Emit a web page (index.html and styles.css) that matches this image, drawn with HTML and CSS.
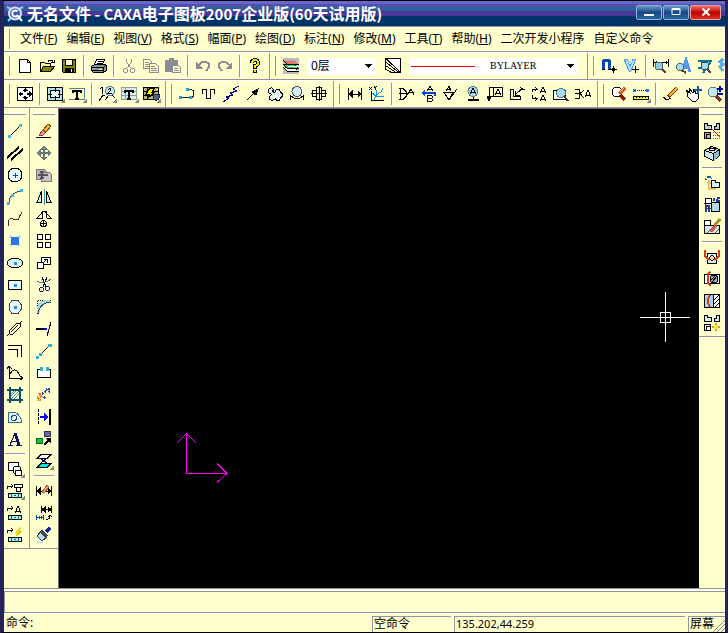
FILE: index.html
```html
<!DOCTYPE html>
<html lang="zh-CN">
<head>
<meta charset="utf-8">
<title>无名文件 - CAXA电子图板2007企业版</title>
<link rel="stylesheet" href="styles.css">
</head>
<body>
<div class="window">
<header class="titlebar">
  <svg class="logo" viewBox="0 0 18 18"><path d="M1 2l4 2M17 2l-4 2M2 16l3-3" stroke="#9cc8ff" stroke-width="2"/><circle cx="9" cy="8.500" r="6" fill="#3858a8" stroke="#d8e8ff" stroke-width="2"/><path d="M11.500 6.500a3 3 0 1 0 0 4M11 10l5 6" stroke="#fff" stroke-width="2"/></svg>
  <h1>无名文件<span> - CAXA</span>电子图板<span>2007</span>企业版<span>(60</span>天试用版<span>)</span></h1>
  <div class="winbtns">
    <button aria-label="最小化"><svg viewBox="0 0 16 12"><path d="M3 9h10" stroke="#fff" stroke-width="2"/></svg></button>
    <button aria-label="最大化"><svg viewBox="0 0 16 12"><path d="M4 2.500h8v6h-8zM4 3.500h8" stroke="#fff"/></svg></button>
    <button class="close" aria-label="关闭"><svg viewBox="0 0 16 12"><path d="M4.500 2.500l7 7M11.500 2.500l-7 7" stroke="#fff" stroke-width="2"/></svg></button>
  </div>
</header>
<nav class="menubar">
  <i class="grip"></i>
  <button>文件(<u>F</u>)</button><button>编辑(<u>E</u>)</button><button>视图(<u>V</u>)</button><button>格式(<u>S</u>)</button><button>幅面(<u>P</u>)</button><button>绘图(<u>D</u>)</button><button>标注(<u>N</u>)</button><button>修改(<u>M</u>)</button><button>工具(<u>T</u>)</button><button>帮助(<u>H</u>)</button><button>二次开发小程序</button><button>自定义命令</button>
</nav>
<div class="row">
  <div class="bar"><i class="grip"></i>
    <button aria-label="新建"><svg viewBox="0 0 16 16"><path d="M2.500 1.500h8l3 3v10h-11zM10.500 1.500v3h3" fill="#fff"/></svg></button>
    <button aria-label="打开"><svg viewBox="0 0 16 16"><path d="M1.500 13.500v-9h4l1 1h5v3" fill="#ffff9c"/><path d="M1.500 13.500l3-5h11l-4 5z" fill="#848400"/><path d="M9 3.500q3-3 5 0m1-2v3h-3"/></svg></button>
    <button aria-label="保存"><svg viewBox="0 0 16 16"><path d="M1.500 1.500h13v13h-12l-1-1z" fill="#848400"/><path d="M4.500 1.500h7v6h-7z" fill="#ffffce"/><path d="M4 10h8v4H4z" fill="#000"/><path d="M10.500 11v3" stroke="#fff"/></svg></button>
    <i class="sep"></i>
    <button aria-label="打印"><svg viewBox="0 0 16 16"><path d="M5.500 1.500h8l-2 5h-8z" fill="#fff"/><path d="M6.500 3.500h5M5.500 5.500h5"/><path d="M.5 8.500l3-2h11l1 2v4l-3 2h-10l-2-2z" fill="#8c9c9c"/><path d="M1 9.500h11l3-2M12.500 10v4M1 12.500h11"/><path d="M8 11h3" stroke="#ff0"/></svg></button>
    <i class="sep"></i>
    <button class="off" aria-label="剪切"><svg viewBox="0 0 16 16"><path d="M5.500 1v3l5 7M10.500 1v3l-5 7"/><circle cx="4.500" cy="12.500" r="2"/><circle cx="11.500" cy="12.500" r="2"/></svg></button>
    <button class="off" aria-label="复制"><svg viewBox="0 0 16 16"><path d="M.5 1.500h6l2 2v7h-8zM2 4.500h4M2 6.500h5M2 8.500h5"/><path d="M6.500 5.500h6l3 3v6h-9z" fill="#ffffce"/><path d="M8 8.500h4M8 10.500h6M8 12.500h6"/></svg></button>
    <button class="off" aria-label="粘贴"><svg viewBox="0 0 16 16"><path d="M.5 2.500h12v11H.5z" fill="#8c8c94"/><path d="M4 1.500h5" stroke-width="3"/><path d="M7.500 7.500h6l2 2v5h-8z" fill="#ffffce"/><path d="M9 10.500h4M9 12.500h5"/></svg></button>
    <i class="sep"></i>
    <button class="off" aria-label="撤消"><svg viewBox="0 0 16 16"><path d="M4 7q3-4 7-3 4 1 3 5l-3 4" stroke-width="2"/><path d="M1 4v7h7z" fill="#8c8c94" stroke="none"/></svg></button>
    <button class="off" aria-label="恢复"><svg viewBox="0 0 16 16"><path d="M12 7q-3-4-7-3-4 1-3 5l3 4" stroke-width="2"/><path d="M15 4v7H8z" fill="#8c8c94" stroke="none"/></svg></button>
    <i class="sep"></i>
    <button aria-label="帮助"><svg viewBox="0 0 16 16"><path d="M5 5q0-3 3-3t3 3q0 2-3 3v3M8 12v3" stroke-width="4"/><path d="M5 5q0-3 3-3t3 3q0 2-3 3v2M8 12v2" stroke="#ffe600" stroke-width="2"/></svg></button>
  </div>
  <div class="bar"><i class="grip"></i>
    <button aria-label="层控制"><svg viewBox="0 0 16 16"><path d="M0 0h16v16H0z" fill="#bdbdbd" stroke="none"/><path d="M.5 9.500l4 4h11l-4-4z" fill="#fff"/><path d="M.5 6.500l4 4h11l-4-4z" fill="#40d850"/><path d="M4.500 12.500h11M.5 8.500l4 4" stroke="#fff"/><path d="M.5 2.500l4 4h11l-4-4z" fill="#e87068" stroke="#a8a8a8"/><path d="M.5 2.500l4 4h11"/><path d="M4.500 8.500h11" stroke="#fff"/></svg></button>
    <div class="combo layer"><select aria-label="当前层"><option>0层</option></select><svg viewBox="0 0 8 5"><path d="M0 0h8L4 4z" fill="#000" stroke="none"/></svg></div>
    <button aria-label="颜色"><svg viewBox="0 0 16 16"><path d="M1 .5h14.500v14z" fill="#fff"/><path d="M.5 1v3l15 11.500M.5 4.500v3L11 14.500h4M.5 8v3l6 3.500h4"/></svg></button>
    <div class="combo line"><svg class="sample" viewBox="0 0 64 3"><path d="M0 1.500h64" stroke="#f00"/></svg><select aria-label="线型"><option>BYLAYER</option></select><svg viewBox="0 0 8 5"><path d="M0 0h8L4 4z" fill="#000" stroke="none"/></svg></div>
  </div>
  <div class="bar last"><i class="grip"></i>
    <button aria-label="捕捉"><svg viewBox="0 0 16 16"><path d="M2.500 12V4q0-2 3-2t3 2v8" stroke="#0848a8" stroke-width="3"/><path d="M1 11.500h3M7 11.500h3M12.500 8v7M9 11.500h7"/><path d="M11 10h3v3h-3z" fill="#000" stroke="none"/></svg></button>
    <button aria-label="过滤"><svg viewBox="0 0 16 16"><path d="M1 1h3l3 7 3-7h3L8 13H6z" fill="#9cdfff" stroke="#5898f0"/><path d="M4 4h6" stroke="#9cdfff" stroke-width="2"/><path d="M12.500 8v7M9 11.500h7"/></svg></button>
    <i class="sep"></i>
    <button aria-label="查询距离"><svg viewBox="0 0 16 16"><path d="M.5 1v8M15.500 1v8M1 4.500h14M3 3v3M13 3v3"/><circle cx="6" cy="8" r="4" fill="#8ccbe0" stroke="#486878"/><path d="M9 11l4 4" stroke-width="2" stroke="#603838"/></svg></button>
    <button aria-label="查询文字"><svg viewBox="0 0 16 16"><path d="M7 14l4-12 4 12M8 9h5" stroke="#5898f0" stroke-width="3"/><circle cx="5" cy="9" r="3.500" fill="#a5dcec" stroke="#486878"/><path d="M7 12l4 3" stroke-width="2" stroke="#603838"/></svg></button>
    <button aria-label="查询面积"><svg viewBox="0 0 16 16"><path d="M1 3h14M1 10h5M4 3l9 11M14 3L6 15" stroke="#087890" stroke-width="2"/><circle cx="8" cy="8" r="4" fill="#a5dcec" stroke="#246"/><path d="M10 11l4 4" stroke="#603838" stroke-width="2"/></svg></button>
    <button aria-label="查询"><svg viewBox="0 0 16 16"><path d="M4 1L1 4l3 2-3 3 3 4" stroke="#60b0e8" stroke-width="3"/></svg></button>
  </div>
</div>
<div class="row">
  <div class="bar"><i class="grip"></i>
    <button aria-label="显示全部"><svg viewBox="0 0 16 16"><path d="M.5 1.500h15v13H.5z" fill="#fff"/><path d="M8 3v3M8 10v3M3 8h3M10 8h3" stroke-width="2"/><path d="M5 5l3-3 3 3zM5 11l3 3 3-3zM4 5L1 8l3 3zM12 5l3 3-3 3z" fill="#000" stroke="none"/></svg></button>
    <i class="sep"></i>
    <button aria-label="图幅"><svg viewBox="0 0 16 16"><path d="M.5 1.500h15v13H.5z" fill="#b8e0e8"/><path d="M3.500 4.500h9v7h-9z" fill="#e8f8ff"/><path d="M8.500 2v4M8.500 10v4M1 8.500h4M11 8.500h4"/><path class="corner" d="M18 12v5h-5z"/></svg></button>
    <button aria-label="标题栏"><svg viewBox="0 0 16 16"><path d="M0 2.500h15.500v11H0" stroke="#57808c"/><path d="M3 5h10M8 5v8M4 4v3M12 4v3M6 13h4" stroke-width="2"/><path class="corner" d="M18 12v5h-5z"/></svg></button>
    <i class="sep"></i>
    <button aria-label="序号"><svg viewBox="0 0 16 16"><path d="M1 2.500l2-1V8M0 15l4-6h2M6 14l4-5"/><circle cx="11" cy="5" r="4.500" fill="#c8e8ef" stroke="#57808c"/><path d="M9 4q2-3 3 0L9 7.500h4M13 9l3 3"/><path class="corner" d="M18 12v5h-5z"/></svg></button>
    <button aria-label="明细表"><svg viewBox="0 0 16 16"><path d="M.5 1.500h15v12H.5zM4.500 1v12M0 5.500h16M0 9.500h16" stroke="#8ca0a0" fill="#ddeeee"/><path d="M4 5h8M8 5v8M4 4v3M12 4v3M6 13h4" stroke-width="2"/><path class="corner" d="M18 12v5h-5z"/></svg></button>
    <button aria-label="图库"><svg viewBox="0 0 16 16"><path d="M.5 1.500h15v12H.5z" fill="#b8bc72"/><path d="M1 5.500h14M0 9.500h14M4.500 2v12"/><path d="M7 2L3 8h4l-3 5 8-7H9l3-4z" fill="#ff0"/><path d="M10 8h6v4l-3 3-3-3z" fill="#526090" stroke="#223"/><path class="corner" d="M18 12v5h-5z"/></svg></button>
  </div>
  <div class="bar"><i class="grip"></i>
    <button aria-label="轮廓线"><svg viewBox="0 0 16 16"><path d="M1 11.500h11M8 3.500h3q4 0 4 4t-3 4" stroke="#124"/><path d="M0 10h3v3H0zM10 10h3v3h-3zM7 2h3v3H7z" fill="#2aa0d0" stroke="none"/></svg></button>
    <button aria-label="波浪线"><svg viewBox="0 0 16 16"><path d="M1.500 8V5q0-2 2-2t2 2v6q0 2 2 2t2-2V5q0-2 2-2t2 2v3"/></svg></button>
    <button aria-label="双折线"><svg viewBox="0 0 16 16"><path d="M16 0l-6 3 4 2-7 2 3 2-7 2 3 1-6 4" stroke="#000084"/></svg></button>
    <button aria-label="箭头"><svg viewBox="0 0 16 16"><path d="M2 14l8-8"/><path d="M13 3l-2 6-4-3z" fill="#000"/></svg></button>
    <button aria-label="齿轮"><svg viewBox="0 0 16 16"><path d="M1.500 3.500l3-2 2 2-1 2 2 1 2-3h3l1 3 2 1v3l-2 1-1 3h-3l-1-2-3 2-3-1v-3l2-2-3-2z" fill="#def"/><path d="M7 9h3v3H7z" fill="#ffffce" stroke="none"/></svg></button>
    <button aria-label="圆弧拟合"><svg viewBox="0 0 16 16"><circle cx="8" cy="5.500" r="5" fill="#d6eef2" stroke="#456"/><path d="M1.500 14V9.500l4 3h5l4-3V14"/></svg></button>
    <button aria-label="孔轴"><svg viewBox="0 0 16 16"><path d="M0 7.500h16M1.500 4.500h4v6h-4zM5.500 1.500h5v12h-5zM10.500 4.500h4v6h-4zM8.500 0v15"/></svg></button>
  </div>
  <div class="bar"><i class="grip"></i>
    <button aria-label="基本标注"><svg viewBox="0 0 16 16"><path d="M1.500 2v12M14.500 2v12M2 8h12" stroke-width="1"/><path d="M5 5v6L2 8zM11 5v6l3-3z" fill="#000"/></svg></button>
    <button aria-label="坐标标注"><svg viewBox="0 0 16 16"><path d="M2.500 5v9.500H15M0 1l3 3M3 1L0 4M5 0l1 2 2-2M6 2v2"/><path d="M7 10V4M7 9l5-3 2-4M3 7l4 3 8 1M7 10l-2 4" stroke="#1698e8"/></svg></button>
    <i class="sep"></i>
    <button aria-label="倒角标注"><svg viewBox="0 0 16 16"><path d="M0 2.500h4l3 3v5l-3 3H0M1.500 2v11M0 7.500h9M8 9l4-6 3 6M10 6.500h5"/></svg></button>
    <button aria-label="引出说明"><svg viewBox="0 0 16 16"><path d="M1 7h13v3" stroke="#0848c8" stroke-width="2"/><path d="M4 4L0 7l4 3z" fill="#0848c8" stroke="none"/><path d="M6 5l3-5 3 5M7 3.500h4M6.500 9.500h4q2 1 0 3 2 1 0 3h-4zM7 12.500h4"/></svg></button>
    <button aria-label="粗糙度"><svg viewBox="0 0 16 16"><path d="M1 6.500h9L6 14zM6 14l8-11M3 5l3-5 2 5M4 3.500h4"/></svg></button>
    <button aria-label="基准代号"><svg viewBox="0 0 16 16"><circle cx="8" cy="5.500" r="5" fill="#a5d8eb" stroke="#57808c"/><path d="M5 8l3-6 3 6M6 6.500h4M8.500 11v3"/><path d="M3 14h11" stroke-width="2"/></svg></button>
    <button aria-label="形位公差"><svg viewBox="0 0 16 16"><path d="M2.500 1.500h13v9h-13zM6.500 1v9M8 9l3-6 3 6M9 7.500h4"/><path d="M0 10h4l-2 5z" fill="#000"/></svg></button>
    <button aria-label="焊接符号"><svg viewBox="0 0 16 16"><path d="M1.500 3.500v10h10v-3h-7v-7zM14 2L7 8M6.500 5v4h4M11 1l2 2h3"/></svg></button>
    <button aria-label="剖切符号"><svg viewBox="0 0 16 16"><path d="M1.500 6V3.500h5M4 1l2 2-2 2M1.500 9v3.500h5M4 11l2 2-2 2M9 7l3-6 3 6M10 5.500h4M9 15l3-6 3 6M10 13.500h4"/></svg></button>
    <button aria-label="局部放大"><svg viewBox="0 0 16 16"><path d="M.5 4.500h12v9H.5z" fill="#fff"/><circle cx="8" cy="7" r="4.500" fill="#a5d8eb" stroke="#57808c"/><path d="M11 10l4 5" stroke-width="2" stroke="#433"/></svg></button>
    <button aria-label="中心孔标注"><svg viewBox="0 0 16 16"><path d="M0 3.500h4.500v9H0M0 7.500h4M9 4L5 7.500 9 12M10 11l3-7 3 7M11 9.500h4"/></svg></button>
  </div>
  <div class="bar last"><i class="grip"></i>
    <button aria-label="重画"><svg viewBox="0 0 16 16"><circle cx="6" cy="6" r="5" fill="#fff"/><path d="M9 9l5 5" stroke="#8c1808" stroke-width="3"/><path d="M8 8l6-6" stroke="#e84b18" stroke-width="3"/><path d="M9 6l4-4" stroke="#ffd060"/></svg></button>
    <button aria-label="尺寸线"><svg viewBox="0 0 16 16"><path d="M2 4.500h12" stroke-dasharray="1 1"/><path d="M0 3h3v3H0zM13 3h3v3h-3z" fill="#2a70d0" stroke="none"/><path d="M.5 10.500h15v3H.5z" fill="#ffff38"/><path d="M3.500 10v2M6.500 10v2M9.500 10v2M12.500 10v2"/><path class="corner" d="M18 12v5h-5z"/></svg></button>
    <i class="sep"></i>
    <button aria-label="刷新"><svg viewBox="0 0 16 16"><path d="M5 11l9-9" stroke="#7c2800" stroke-width="4"/><path d="M6 10l8-8" stroke="#f0b018" stroke-width="2"/><path d="M0 11l4 3 4-2"/></svg></button>
    <button aria-label="动态平移"><svg viewBox="0 0 16 16"><path d="M3 8L1 4l4 3-1-5 4 5 1-4 2 5 2-1v6l-2 2H7l-5-5z" fill="#fff"/><path d="M13 0v8M9 4h8" stroke="#1858a8" stroke-width="2"/></svg></button>
    <button aria-label="动态缩放"><svg viewBox="0 0 16 16"><circle cx="6" cy="6" r="5" fill="#c5e8f2" stroke="#57808c"/><path d="M9 10l5 5" stroke="#803030" stroke-width="3"/><path d="M13 0v6M10 3h6M10 8h6" stroke="#0000a0" stroke-width="2"/></svg></button>
  </div>
</div>
<main class="work">
  <div class="dock left">
    <div class="col"><i class="hgrip"></i>
      <button aria-label="直线"><svg viewBox="0 0 16 16"><path d="M2 14L14 2"/><path d="M1 12h3v3H1zM12 1h3v3h-3z" fill="#42b5e0" stroke="none"/></svg></button>
      <button aria-label="平行线"><svg viewBox="0 0 16 16"><path d="M0 13L12 2M4 15L16 4" stroke-width="2"/></svg></button>
      <button aria-label="圆"><svg viewBox="0 0 16 16"><circle cx="8" cy="8" r="7" fill="#eef8ff"/><path d="M8.500 6v5M6 8.500h5" stroke="#0048a8"/></svg></button>
      <button aria-label="圆弧"><svg viewBox="0 0 16 16"><path d="M2 14q0-10 12-12" stroke="#246"/><path d="M0 13h3v3H0zM4 5h3v3H4zM13 0h3v3h-3z" fill="#42b5e0" stroke="none"/></svg></button>
      <button aria-label="样条"><svg viewBox="0 0 16 16"><path d="M1 15q0-9 5-7t6-1 3-6" stroke="#333"/></svg></button>
      <button aria-label="点"><svg viewBox="0 0 16 16"><path d="M3 3l10 10M13 3L3 13" stroke="#9cd8f8" stroke-width="2"/><path d="M4 4h8v8H4z" fill="#2878e8" stroke="none"/></svg></button>
      <button aria-label="椭圆"><svg viewBox="0 0 16 16"><ellipse cx="8" cy="8" rx="7.500" ry="5" fill="#e0f4fa"/><path d="M7 7h3v3H7z" fill="#1898d0" stroke="none"/></svg></button>
      <button aria-label="矩形"><svg viewBox="0 0 16 16"><path d="M1.500 3.500h13v9h-13z" fill="#eaf8ff"/><path d="M7 7h3v3H7z" fill="#1898d0" stroke="none"/></svg></button>
      <button aria-label="正多边形"><svg viewBox="0 0 16 16"><path d="M5 1.500h6l3 4v5l-3 4H5l-3-4v-5z" fill="#eaf8ff" stroke="#345"/><path d="M7 7h3v3H7z" fill="#1898d0" stroke="none"/></svg></button>
      <button aria-label="中心线"><svg viewBox="0 0 16 16"><path d="M0 15l3-3M4 11l7-7M12 3l3-3M2 10l8-8h3l1 3-8 8H3z"/></svg></button>
      <button aria-label="等距线"><svg viewBox="0 0 16 16"><path d="M1 2.500h13.500V14M1 6.500h9.500V14"/></svg></button>
      <button aria-label="公式曲线"><svg viewBox="0 0 16 16"><path d="M2.500 1v12.500H16M0 3.500l2-2 3 2M3 9q5-9 10 2M13 11l3 2-3 2"/></svg></button>
      <button aria-label="剖面线"><svg viewBox="0 0 16 16"><path d="M3 0v16M13 0v16M0 3h16M0 13h16" stroke="#0e5268" stroke-width="2"/><path d="M4 7l3-3M4 12l8-8M7 12l5-5M4 9l5-5" stroke="#3685ba"/></svg></button>
      <button aria-label="填充"><svg viewBox="0 0 16 16"><path d="M1.500 3.500h7q6 4 6 10h-13z" fill="#e4f6fc" stroke="#24718b"/><circle cx="7" cy="9" r="2.500" stroke="#246"/></svg></button>
      <button aria-label="文字"><svg viewBox="0 0 16 16"><path d="M3 14L8 2M5 10h6" stroke="#101060" stroke-width="1"/><path d="M8 2l4 12" stroke="#101060" stroke-width="3"/><path d="M1 14.500h5M9 14.500h6" stroke="#101060"/></svg></button>
      <i class="hsep"></i>
      <button aria-label="块"><svg viewBox="0 0 16 16"><path d="M1.500 1.500h10v8h-10z" fill="#fff"/><circle cx="10" cy="9" r="4" fill="#fff"/><path d="M8.500 9.500h6v5h-6z" fill="#fff"/><path class="corner" d="M18 12v5h-5z"/></svg></button>
      <button aria-label="提取图符"><svg viewBox="0 0 16 16"><path d="M.5 6V3.500h5M4 1l2 2-2 2M7.500 1.500h8v3h-8zM9.500 4.500h4v4h-4z"/><rect x="1.500" y="10.500" width="13" height="4" rx="1" fill="#aff4fb"/><path d="M4.500 11v4M7 12.500h2M11.500 11v4" stroke="#067"/><path class="corner" d="M18 12v5h-5z"/></svg></button>
      <button aria-label="属性定义"><svg viewBox="0 0 16 16"><path d="M.5 6V3.500h5M4 1l2 2-2 2M8 8l3-7 3 7M9 6.500h4"/><rect x="1.500" y="10.500" width="13" height="4" rx="1" fill="#aff4fb"/><path d="M4.500 11v4M7 12.500h2M11.500 11v4" stroke="#067"/></svg></button>
      <button aria-label="驱动图符"><svg viewBox="0 0 16 16"><path d="M.5 6V3.500h5M4 1l2 2-2 2"/><path d="M14 0L9 5h3l-3 4 6-5h-3z" fill="#ff0" stroke="#dc0"/><rect x="1.500" y="10.500" width="13" height="4" rx="1" fill="#aff4fb"/><path d="M4.500 11v4M7 12.500h2M11.500 11v4" stroke="#067"/></svg></button>
    </div>
    <div class="col"><i class="hgrip"></i>
      <button aria-label="删除"><svg viewBox="0 0 16 16"><path d="M3 12l4-5 5-6 3 2-5 6-4 4z" fill="#f7ba31" stroke="#7b4a10"/><path d="M3 12l4-5 3 2-4 4z" fill="#f0a090" stroke="#a03030"/><path d="M0 14.500h15"/></svg></button>
      <button aria-label="平移"><svg viewBox="0 0 16 16"><path d="M8 2v12M2 8h12" stroke="#677" stroke-width="2"/><path d="M5 4l3-3 3 3zM5 12l3 3 3-3zM4 5L1 8l3 3zM12 5l3 3-3 3z" fill="#788" stroke="#677"/></svg></button>
      <button aria-label="平移复制"><svg viewBox="0 0 16 16"><path d="M.5 2.500h8l2 2v8H.5z" fill="#b5b5b5" stroke="#777"/><path d="M5.500 5.500h8l2 2v7h-10z" fill="#c8c8c8" stroke="#777"/><path d="M6 4v8M2 8h10M4 5h4M4 11h4" stroke="#555" stroke-width="2"/></svg></button>
      <button aria-label="镜像"><svg viewBox="0 0 16 16"><path d="M5.500 2v11.500H1z" fill="#dcecec"/><path d="M10.500 2v11.500H15z" fill="#dcecec"/><path d="M8 0v16" stroke="#31989b"/></svg></button>
      <button aria-label="旋转"><svg viewBox="0 0 16 16"><path d="M1 7.500l5-6v6zM10 2l5 5h-4zM7 .5h3v2"/><circle cx="7.500" cy="12.500" r="3"/><path d="M7.500 10v5M5 12.500h5"/></svg></button>
      <button aria-label="阵列"><svg viewBox="0 0 16 16"><path d="M1.500 1.500h5v5h-5zM9.500 1.500h5v5h-5zM1.500 9.500h5v5h-5zM9.500 9.500h5v5h-5z" fill="#fff"/></svg></button>
      <button aria-label="比例缩放"><svg viewBox="0 0 16 16"><path d="M5.500 2.500h9v7h-9z" fill="#fff"/><path d="M1.500 7.500h6v6h-6z" fill="#fff"/><path d="M7 8l4-4M8 4.500h3v3"/></svg></button>
      <button aria-label="裁剪"><svg viewBox="0 0 16 16"><path d="M1 4q6 4 14-2" stroke="#478"/><path d="M6 0l4 10M11 0L7 10"/><circle cx="5.500" cy="12.500" r="2" stroke="#0010b0"/><circle cx="11.500" cy="11.500" r="2" stroke="#0010b0"/></svg></button>
      <button aria-label="过渡"><svg viewBox="0 0 16 16"><path d="M1.500 15V1.500H16" stroke-dasharray="1 1"/><path d="M2 13Q2 2 14 2" stroke="#a5d9ea" stroke-width="3"/><path d="M2 15Q3 4 15 3" stroke="#246"/></svg></button>
      <button aria-label="齐边"><svg viewBox="0 0 16 16"><path d="M0 8h8" stroke-width="2"/><path d="M8 8h3" stroke="#00f" stroke-width="2"/><path d="M15 1l-4 14"/></svg></button>
      <button aria-label="拉伸"><svg viewBox="0 0 16 16"><path d="M2 14L14 2"/><path d="M0 13h3v3H0zM3 10h3v3H3zM12 1h4v3h-4z" fill="#38afd6" stroke="none"/></svg></button>
      <button aria-label="打断"><svg viewBox="0 0 16 16"><path d="M5 4.500H1.500v8h13v-8H11" fill="#fff"/><path d="M4 2h3v4H4zM10 2h3v4h-3z" fill="#38afd6" stroke="none"/></svg></button>
      <button aria-label="打散"><svg viewBox="0 0 16 16"><path d="M2 14l4-5M1 10l4 3M3 6l2 3" stroke="#f47b20" stroke-width="2"/><path d="M6 7l4-3M10 2l4 3M8 10l2 2M13 1v3" stroke="#2742a8" stroke-width="2" stroke-dasharray="2 1"/><path d="M1 15l5-5M7 7l2 2" stroke="#ff9"/></svg></button>
      <button aria-label="局部移动"><svg viewBox="0 0 16 16"><path d="M2.500 0v16" stroke-dasharray="3 1"/><path d="M14 0v16" stroke-width="2"/><path d="M4 8h5" stroke="#00f" stroke-width="2"/><path d="M8 4v8l4-4z" fill="#00f" stroke="none"/></svg></button>
      <button aria-label="格式刷"><svg viewBox="0 0 16 16"><path d="M.5 7.500h6v5h-6z" fill="#18bd38" stroke="#087018"/><path d="M8.500.5h6v5h-6z" fill="#6864ae" stroke="#334"/><path d="M8 14l5-5" stroke-width="2"/><path d="M9 7h6v6z" fill="#000" stroke="none"/></svg></button>
      <button aria-label="叠放次序"><svg viewBox="0 0 16 16"><path d="M5 1.500h10l-4 4H1z" fill="#fff"/><path d="M5 10.500h10l-4 4H1z" fill="#00e4ee"/><path d="M11 5L5 10M5 6l6 4" stroke="#005"/><path class="corner" d="M18 12v5h-5z"/></svg></button>
      <i class="hsep"></i>
      <button aria-label="标注修改"><svg viewBox="0 0 16 16"><path d="M.5 3v10M15.500 3v10M1 8.500h14"/><path d="M4 5L1 8l3 3zM12 5l3 3-3 3z" fill="#000"/><path d="M6 9l5-7 2 2-5 6z" fill="#f1a173" stroke="#b45633"/></svg></button>
      <button aria-label="尺寸驱动"><svg viewBox="0 0 16 16"><path d="M5.500 1v7M15.500 1v7M6 4.500h10"/><path d="M9 2v5L6 4.500zM12 2v5l3-2.500z" fill="#000"/><path d="M.5 10v5M7.500 10v5M1 12.500h7M3.500 11v3M5.500 11v3" stroke="#0748a6"/><path d="M10 14.500q4 0 4-4M12 12l2-2 2 2"/></svg></button>
      <button aria-label="特性匹配"><svg viewBox="0 0 16 16"><path d="M10 5l4-4" stroke="#0022a0" stroke-width="4"/><path d="M5 4l6 6-5 4-5-5z" fill="#b8dce8" stroke="#334"/><path d="M5 4l6 6" stroke="#445" stroke-width="3"/><path d="M0 15h7" stroke="#aacddb"/></svg></button>
    </div>
  </div>
  <div class="canvas">
    <svg class="ucs" viewBox="0 0 52 52"><path d="M10.500 2v39.500H51" stroke="#f0f"/><path d="M.5 11.500l10-10 10 10M41 31.500l10 10-10 9" stroke="#f0f"/></svg>
    <svg class="cursor" viewBox="0 0 50 50"><path d="M25.500 0v50M0 25.500h50M20.500 20.500h10v10h-10z" stroke="#fff"/></svg>
  </div>
  <div class="dock right">
    <div class="col"><i class="hgrip"></i>
      <button aria-label="拆画零件"><svg viewBox="0 0 16 16"><path d="M.5.500h3v2h4v4h-7zM10.500 3.500h2v-3h3v6h-5z" fill="#b6d0dc"/><path d="M.5 9.500h6v6h-6zM2.500 15v-3.500h4" fill="#b0b0b0"/><path d="M9 9.500h7M9 12.500h7M9 15.500h7" stroke-dasharray="1 1" stroke="#775"/><path d="M7 5l9 9" stroke="#d01010"/></svg></button>
      <button aria-label="实体"><svg viewBox="0 0 16 16"><path d="M.5 5.500l7-4 8 3v6l-6 5-9-4z" fill="#d2e4ea"/><path d="M10 9l5-4v5l-5 5z" fill="#8cbcd4" stroke="none"/><path d="M.5 5.500l9 3 6-4M9.500 8v7"/><ellipse cx="8" cy="4.500" rx="3" ry="1.500" fill="#fff"/></svg></button>
      <i class="hsep"></i>
      <button aria-label="块插入"><svg viewBox="0 0 16 16"><path d="M1 5l4-4 3 3" stroke="#1457a8" stroke-dasharray="2 1" stroke-width="2"/><path d="M5 5v8M3 8h4M4 14h8" stroke="#f2c062" stroke-width="2"/><path d="M7.500 5.500h4v2h4v5h-8z" fill="#d7effa"/></svg></button>
      <button aria-label="块编辑"><svg viewBox="0 0 16 16"><path d="M1.500 1.500h6v5h-6z" fill="#fff"/><path d="M7.500 5.500h8v9h-8z" fill="#b5daf0"/><path d="M1 9h6M1 13h6M9 2l6 2M14 0v5" stroke="#1b3cb0" stroke-width="3" stroke-dasharray="2 1"/><path d="M0 6l8 7M1 11h7" stroke="#335"/></svg></button>
      <button aria-label="块删除"><svg viewBox="0 0 16 16"><path d="M.5 1.500h6v5h-6z" fill="#fff"/><path d="M.5 6.500h15v8H.5z" fill="#d8e8ec"/><path d="M7 13l5-7" stroke="#d55b42" stroke-width="3"/><path d="M11 6l5-6" stroke="#a58a30" stroke-width="3"/><path d="M3 14l7-7M11 14l4-4" stroke="#566"/></svg></button>
      <i class="hsep"></i>
      <button aria-label="局部剖"><svg viewBox="0 0 16 16"><path d="M3.500 4.500h9v10h-9z" fill="#d8edf4"/><path d="M1 1v6l3 3h8l3-3V1" stroke="#d33c14" stroke-width="2"/><path d="M8 6l3 3-3 3-3-3z" fill="#ffe080"/></svg></button>
      <button aria-label="旋转剖"><svg viewBox="0 0 16 16"><path d="M.5 3.500h15v9H.5z" fill="#fff"/><circle cx="10" cy="8" r="4" fill="#9aacac"/><path d="M8 11l5-6M7 9l4-4"/><path d="M6 1L4 3v9l3 3" stroke="#d33c14" stroke-width="2"/></svg></button>
      <button aria-label="剖视"><svg viewBox="0 0 16 16"><path d="M.5 1.500h15v13H.5z" fill="#a8d4f0"/><path d="M9.500 1.500h6v13h-6z" fill="#fff"/><path d="M10 7l5-5M10 11l5-5M11 14l4-4"/><path d="M6 2q-4 6 0 12" stroke="#d33c14" stroke-width="2"/></svg></button>
      <button aria-label="更新视图"><svg viewBox="0 0 16 16"><path d="M.5.500h3v2h4v4h-7zM10.500 3.500h2v-3h3v6h-5z" fill="#d6edf4"/><path d="M.5 9.500h6v6h-6zM2.500 15v-3.500h4" fill="#fff"/><path d="M12 8v8M8 12h8" stroke="#b8a848" stroke-width="2"/><path d="M10 10h4v4h-4z" fill="#ffec20" stroke="none"/></svg></button>
    </div>
  </div>
</main>
<div class="command"></div>
<footer class="status">
  <label for="cmd">命令:</label><input id="cmd" type="text">
  <span class="cell idle">空命令</span>
  <span class="cell coord">135.202,44.259</span>
  <span class="cell snap">屏幕</span>
  <svg class="resize" viewBox="0 0 12 12"><path d="M0 12L12 0M4 12l8-8M8 12l4-4" stroke="#8c8c94"/></svg>
</footer>
</div>
</body>
</html>
```
FILE: styles.css
```css
* { box-sizing: border-box; }
:root { --cream: #ffffce; --gray: #9494a0; }
body { margin: 0; background: #000; color: #000; font: 12px/16px "Noto Sans", "Noto Sans CJK SC", sans-serif; }
.window {
  height: 100vh; display: flex; flex-direction: column; overflow: hidden;
  border: solid #242458; border-width: 1px 3px 1px 4px; border-top-color: #000; border-bottom-color: #000;
  background: var(--cream);
}
button { font: inherit; color: inherit; border: 0; background: none; padding: 0; }
svg { display: block; fill: none; stroke: #000; overflow: visible; }
.bar svg, .col svg, .canvas svg { shape-rendering: crispEdges; }
.corner { fill: #8c8c84; stroke: none; }

.titlebar {
  flex: none; height: 25px; display: flex; align-items: center; gap: 3px; padding: 0 2px;
  background: linear-gradient(#6868c8 0 3px, #5050b0 3px 6px, #306098 6px 10px, #483898 10px 15px, #003468 15px);
}
.logo { width: 18px; height: 18px; }
.titlebar h1 { flex: 1; margin: 0; color: #fff; font: bold 16px/22px "Noto Sans CJK SC", sans-serif; white-space: nowrap; }
.titlebar h1 span { font-size: 15px; white-space: pre; }
.winbtns { display: flex; gap: 1px; padding-right: 2px; margin-top: -3px; }
.winbtns button {
  width: 26px; height: 15px; display: grid; place-items: center;
  border: 1px solid #8ab0dc; border-radius: 2px; background: linear-gradient(#6898c8, #184880 50%, #2868a0);
}
.winbtns .close { width: 31px; background: linear-gradient(#f07068, #c00000 50%, #e03020); border-color: #e8a0a0; }
.winbtns svg { width: 16px; height: 12px; }

.menubar { flex: none; height: 26px; display: flex; align-items: center; gap: 9px; border: solid var(--gray); border-width: 1px 0; white-space: nowrap; }
.menubar .grip { margin-right: -3px; }
.grip { flex: none; width: 10px; height: 20px; background: linear-gradient(90deg, transparent 3px, #fff 3px 4px, transparent 4px 5px, var(--gray) 5px 6px, transparent 6px); }
.row { flex: none; height: 28px; display: flex; overflow: hidden; border-top: 1px solid #fff; border-bottom: 1px solid var(--gray); }
.bar { flex: none; display: flex; align-items: center; padding-right: 4px; background: linear-gradient(var(--gray), var(--gray)) right 0 top 0 / 1px 100% no-repeat; }
.bar.last { padding-right: 0; background: none; }
.bar button, .col button { flex: none; width: 22px; height: 22px; display: grid; place-items: center; }
.bar button svg, .col button svg { width: 16px; height: 16px; }
.off svg { stroke: #8c8c94; }
.sep { flex: none; width: 8px; height: 22px; background: linear-gradient(90deg, transparent 3px, var(--gray) 3px 4px, #fff 4px 5px, transparent 5px); }

.combo { display: flex; align-items: center; height: 17px; margin: 0 6px; padding: 0 4px 0 3px; background: #fff; }
.combo.layer { width: 68px; }
.combo.line { width: 168px; padding-left: 1px; }
.combo select { flex: 1; min-width: 0; appearance: none; border: 0; padding: 0; background: none; color: #000; font: inherit; }
.combo.line select { padding-left: 15px; font: 10px/16px "Liberation Serif", serif; }
.combo svg { width: 8px; height: 5px; }
.combo .sample { width: 64px; height: 3px; }

.work { flex: 1; min-height: 0; display: flex; border-bottom: 1px solid var(--gray); }
.dock { flex: none; display: flex; align-items: flex-start; border-right: 1px solid #686870; }
.col { display: flex; flex-direction: column; align-items: center; width: 26px; padding-bottom: 2px; border-right: 1px solid var(--gray); border-bottom: 1px solid var(--gray); }
.left .col { padding-right: 3px; }
.left .col + .col { width: 28px; padding-right: 0; border-right: 0; }
.right { border: 0; }
.right .col { border-right: 0; }
.hgrip { flex: none; width: 22px; height: 12px; background: linear-gradient(transparent 4px, #fff 4px 5px, transparent 5px 6px, var(--gray) 6px 7px, transparent 7px); }
.hsep { flex: none; width: 20px; height: 8px; background: linear-gradient(transparent 3px, var(--gray) 3px 4px, #fff 4px 5px, transparent 5px); }
.canvas { flex: 1; position: relative; background: #000; border-top: 1px solid #686870; overflow: hidden; }
.ucs { position: absolute; left: 117px; bottom: 104px; width: 52px; height: 52px; }
.cursor { position: absolute; right: 9px; top: 183px; width: 50px; height: 50px; }

.command { flex: none; height: 22px; margin-top: 2px; border: 1px solid var(--gray); border-right: 0; box-shadow: 0 -1px #fff; }
.status { flex: none; height: 19px; display: flex; align-items: stretch; padding-top: 2px; border-top: 1px solid #fff; gap: 3px; line-height: 14px; position: relative; }
.status label { padding-left: 2px; }
.status input { flex: 1; min-width: 0; border: 0; padding: 0; background: none; font: inherit; outline: 0; }
.cell { border: solid var(--gray); border-width: 1px 0 0 1px; padding-left: 1px; overflow: hidden; white-space: nowrap; }
.idle { width: 79px; }
.coord { width: 231px; font-size: 11px; }
.snap { width: 37px; padding-right: 14px; }
.resize { position: absolute; right: 0; bottom: 0; width: 12px; height: 12px; }
```
